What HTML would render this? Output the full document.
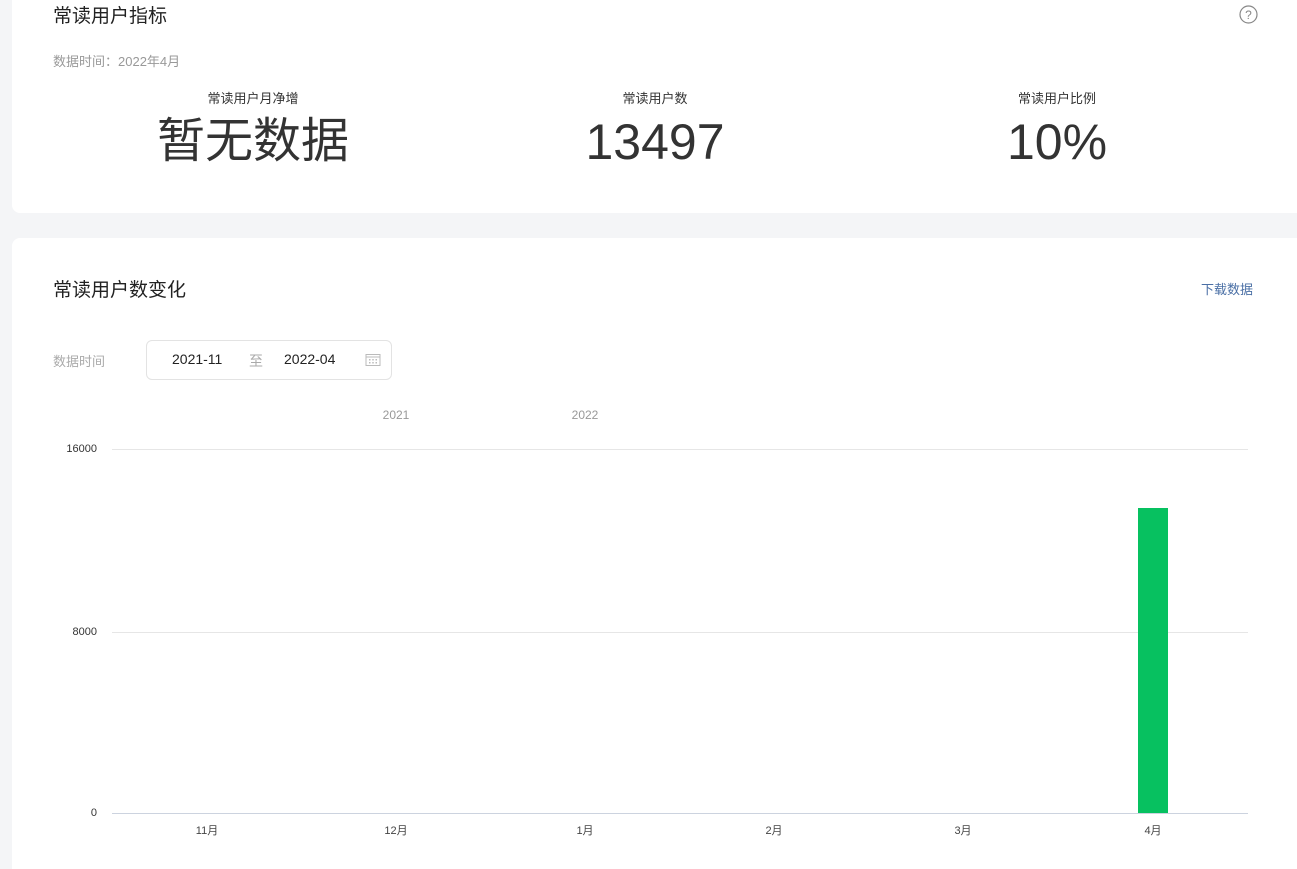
<!DOCTYPE html>
<html><head><meta charset="utf-8"><style>
*{margin:0;padding:0;box-sizing:border-box}
html,body{width:1297px;height:869px;overflow:hidden}
body{background:#f4f5f7;font-family:"Liberation Sans","Noto Sans CJK SC",sans-serif;position:relative;color:#333}
.card{position:absolute;left:12px;width:1285px;background:#fff;border-radius:8px 0 0 8px}
.a{position:absolute;white-space:nowrap}
.c{transform:translateX(-50%)}
</style></head><body>
<div class="card" style="top:0;height:213px;border-radius:0 0 0 8px"></div>
<div class="card" style="top:238px;height:631px;border-radius:8px 0 0 0"></div>
<div class="a" style="left:53px;top:1px;font-size:19px;color:#222">常读用户指标</div>
<svg class="a" style="left:1239px;top:5px" width="19" height="19" viewBox="0 0 19 19"><circle cx="9.5" cy="9.5" r="8.5" fill="none" stroke="#888" stroke-width="1.2"/><text x="9.5" y="14" font-size="12" text-anchor="middle" fill="#888" font-family="Liberation Sans">?</text></svg>
<div class="a" style="left:53px;top:51px;font-size:13px;color:#999">数据时间：2022年4月</div>
<div class="a c" style="left:253px;top:88px;font-size:13px;color:#333">常读用户月净增</div>
<div class="a c" style="left:655px;top:88px;font-size:13px;color:#333">常读用户数</div>
<div class="a c" style="left:1057px;top:88px;font-size:13px;color:#333">常读用户比例</div>
<div class="a c" style="left:253px;top:110px;font-size:48px;color:#333;line-height:64px">暂无数据</div>
<div class="a c" style="left:655px;top:110px;font-size:50px;color:#333;line-height:64px">13497</div>
<div class="a c" style="left:1057px;top:110px;font-size:50px;color:#333;line-height:64px">10%</div>

<div class="a" style="left:53px;top:275px;font-size:19px;color:#222">常读用户数变化</div>
<div class="a" style="left:1201px;top:279px;font-size:13px;color:#4a6fa5">下载数据</div>
<div class="a" style="left:53px;top:351px;font-size:13px;color:#aaa">数据时间</div>
<div class="a" style="left:146px;top:340px;width:246px;height:40px;border:1px solid #e3e3e3;border-radius:6px"></div>
<div class="a" style="left:172px;top:351px;font-size:14px;color:#222">2021-11</div>
<div class="a" style="left:249px;top:351px;font-size:14px;color:#aaa">至</div>
<div class="a" style="left:284px;top:351px;font-size:14px;color:#222">2022-04</div>
<svg class="a" style="left:365px;top:353px" width="16" height="14" viewBox="0 0 16 14"><rect x="1" y="1.5" width="14" height="11" fill="none" stroke="#bbb"/><line x1="1" y1="4" x2="15" y2="4" stroke="#bbb"/><g fill="#bbb"><rect x="4" y="6" width="1.5" height="1.5"/><rect x="7.25" y="6" width="1.5" height="1.5"/><rect x="10.5" y="6" width="1.5" height="1.5"/><rect x="4" y="9" width="1.5" height="1.5"/><rect x="7.25" y="9" width="1.5" height="1.5"/><rect x="10.5" y="9" width="1.5" height="1.5"/></g></svg>

<div class="a c" style="left:396px;top:408px;font-size:12px;color:#999">2021</div>
<div class="a c" style="left:585px;top:408px;font-size:12px;color:#999">2022</div>
<div class="a" style="left:112px;top:449px;width:1136px;height:1px;background:#e6e6e6"></div>
<div class="a" style="left:112px;top:632px;width:1136px;height:1px;background:#e6e6e6"></div>
<div class="a" style="left:112px;top:813px;width:1136px;height:1px;background:#ccd3df"></div>
<div class="a" style="right:1200px;top:443px;font-size:11px;color:#333">16000</div>
<div class="a" style="right:1200px;top:626px;font-size:11px;color:#333">8000</div>
<div class="a" style="right:1200px;top:807px;font-size:11px;color:#333">0</div>
<div class="a" style="left:1138px;top:508px;width:30px;height:305px;background:#07c160"></div>
<div class="a c" style="left:207px;top:822px;font-size:11px;color:#444">11月</div>
<div class="a c" style="left:396px;top:822px;font-size:11px;color:#444">12月</div>
<div class="a c" style="left:585px;top:822px;font-size:11px;color:#444">1月</div>
<div class="a c" style="left:774px;top:822px;font-size:11px;color:#444">2月</div>
<div class="a c" style="left:963px;top:822px;font-size:11px;color:#444">3月</div>
<div class="a c" style="left:1153px;top:822px;font-size:11px;color:#444">4月</div>
</body></html>
